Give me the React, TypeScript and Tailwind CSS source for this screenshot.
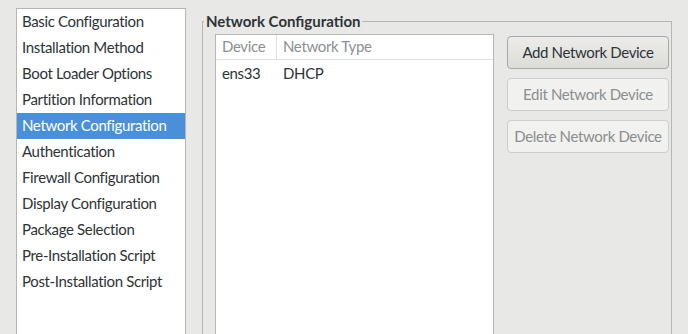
const sections = [
  "Basic Configuration",
  "Installation Method",
  "Boot Loader Options",
  "Partition Information",
  "Network Configuration",
  "Authentication",
  "Firewall Configuration",
  "Display Configuration",
  "Package Selection",
  "Pre-Installation Script",
  "Post-Installation Script",
];

const devices = [{ name: "ens33", type: "DHCP" }];

function SideList({ active }: { active: string }) {
  return (
    <ul className="h-[360px] w-[170px] shrink-0 border border-[#b6b6b3] bg-white">
      {sections.map((label) => (
        <li
          key={label}
          className={
            label === active
              ? "flex h-[26px] items-center bg-[#4a90d9] px-[5px] pb-[1px] text-white"
              : "flex h-[26px] items-center px-[5px] pb-[1px] text-[#2e3436]"
          }
        >
          {label}
        </li>
      ))}
    </ul>
  );
}

function Button({ label, disabled }: { label: string; disabled?: boolean }) {
  return (
    <button
      disabled={disabled}
      className={
        disabled
          ? "h-[33px] w-full rounded-[4px] border border-[#cdcdca] bg-[#f1f1ef] text-[#8b8e8f]"
          : "h-[33px] w-full rounded-[4px] border border-[#a8a8a4] bg-gradient-to-b from-[#edecea] to-[#dcdcd8] text-[#2e3436]"
      }
    >
      {label}
    </button>
  );
}

export default function App() {
  return (
    <div className="flex h-[334px] w-[688px] gap-[16px] overflow-hidden bg-[#e8e8e7] pl-[16px] pt-[8px] font-['Lato',sans-serif] text-[15px] tracking-[-0.35px]">
      <SideList active="Network Configuration" />
      <fieldset className="mt-[2px] h-[360px] w-[470px] shrink-0 border border-[#b6b6b3] pl-[12px] pr-[1px] pt-[1px]">
        <legend className="ml-[-11px] px-[2px] font-bold tracking-normal text-[#2e3436]">Network Configuration</legend>
        <div className="flex gap-[13px]">
          <div className="h-[340px] w-[279px] border border-[#b6b6b3] bg-white">
            <div className="flex h-[25px] items-center border-b border-[#e1e1df] text-[#8d9091]">
              <div className="flex h-full w-[61px] items-center border-r border-[#e1e1df] pl-[6px]">Device</div>
              <div className="pl-[6px]">Network Type</div>
            </div>
            {devices.map((d) => (
              <div key={d.name} className="flex h-[27px] items-center text-[#2e3436]">
                <div className="w-[61px] pl-[6px]">{d.name}</div>
                <div className="pl-[6px]">{d.type}</div>
              </div>
            ))}
          </div>
          <div className="flex w-[162px] flex-col gap-[9px] pt-[2px]">
            <Button label="Add Network Device" />
            <Button label="Edit Network Device" disabled />
            <Button label="Delete Network Device" disabled />
          </div>
        </div>
      </fieldset>
    </div>
  );
}
